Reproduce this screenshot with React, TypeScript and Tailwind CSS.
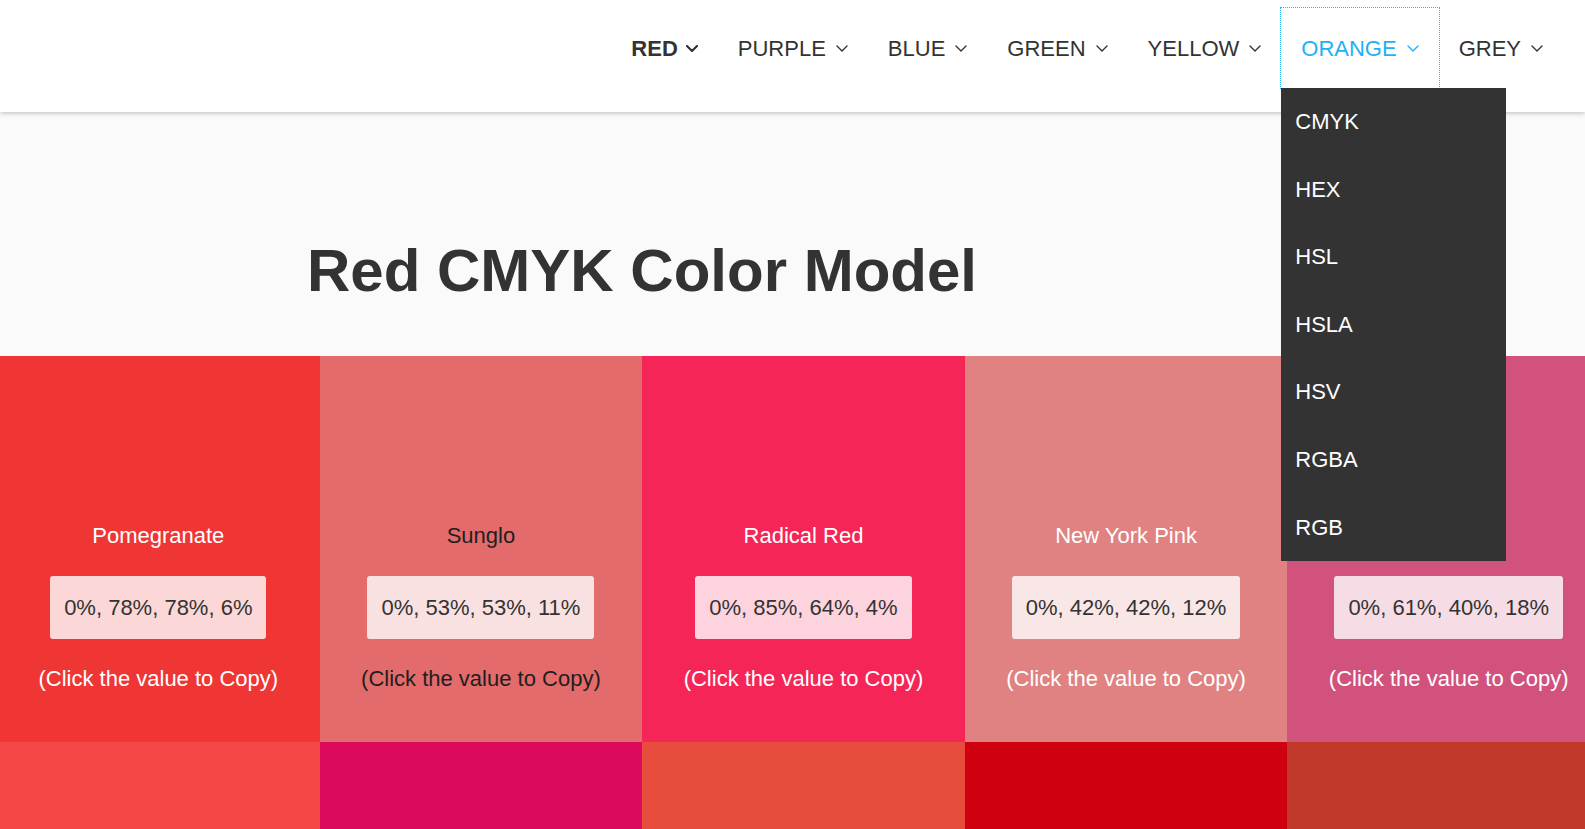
import React from 'react';

const Chevron = ({ bold = false }: { bold?: boolean }) => (
  <svg width="12" height="7" viewBox="0 0 12 7" fill="none" stroke="currentColor" className={bold ? 'ml-2' : 'ml-2.5'}>
    <path d="M1 1l5 5 5-5" strokeWidth={bold ? 2.2 : 1.4} strokeLinecap="round" strokeLinejoin="round" />
  </svg>
);

const navItems = ['RED', 'PURPLE', 'BLUE', 'GREEN', 'YELLOW', 'ORANGE', 'GREY'];
const formats = ['CMYK', 'HEX', 'HSL', 'HSLA', 'HSV', 'RGBA', 'RGB'];

interface Swatch {
  name: string;
  value: string;
  bg: string;
  dark?: boolean;
}

const topRow: Swatch[] = [
  { name: 'Pomegranate', value: '0%, 78%, 78%, 6%', bg: 'bg-[#f03535]' },
  { name: 'Sunglo', value: '0%, 53%, 53%, 11%', bg: 'bg-[#e36b6b]', dark: true },
  { name: 'Radical Red', value: '0%, 85%, 64%, 4%', bg: 'bg-[#f52558]' },
  { name: 'New York Pink', value: '0%, 42%, 42%, 12%', bg: 'bg-[#e08282]' },
  { name: 'Cabaret', value: '0%, 61%, 40%, 18%', bg: 'bg-[#d1527d]' },
];

const bottomRow = ['bg-[#f64747]', 'bg-[#db0a5b]', 'bg-[#e74c3c]', 'bg-[#cf000f]', 'bg-[#c0392b]'];

const SwatchCard = ({ s }: { s: Swatch }) => (
  <div className={`w-[322.6px] h-[386px] shrink-0 flex flex-col items-center pt-[166px] ${s.bg} ${s.dark ? 'text-[#1f1f1f]' : 'text-white'}`}>
    <p className="leading-[27px]">{s.name}</p>
    <button className="mt-[27px] px-[14px] py-[18px] leading-[27px] rounded-[3px] bg-white/80 text-[#333]">{s.value}</button>
    <p className="mt-[26px] leading-[27px]">(Click the value to Copy)</p>
  </div>
);

export default function App() {
  return (
    <div className="min-h-screen overflow-hidden bg-[#fafafa] text-[22px] text-[#333]" style={{ fontFamily: '"Liberation Sans", Arial, sans-serif' }}>
      <header className="relative z-10 h-[112px] bg-white shadow-[0_1px_5px_rgba(0,0,0,0.25)]">
        <ul className="flex justify-end pt-2 pr-[22px]">
          {navItems.map((item) => {
            const active = item === 'ORANGE';
            return (
              <li
                key={item}
                className={`relative h-20 px-5 flex items-center ${item === 'RED' ? 'font-bold' : ''} ${active ? 'text-[#1eb1f4] outline-1 outline-dotted outline-[#1eb1f4]' : ''}`}
              >
                <span>{item}</span>
                <Chevron bold={item === 'RED'} />
                {active && (
                  <ul className="absolute top-full left-0 w-[225px] bg-[#333] text-white">
                    {formats.map((f) => (
                      <li key={f} className="px-[14px] py-5 leading-[27.6px]">{f}</li>
                    ))}
                  </ul>
                )}
              </li>
            );
          })}
        </ul>
      </header>

      <section className="pt-[123px] pb-[49px] pl-[307px]">
        <h1 className="text-[60px] leading-[72px] font-bold text-[#333]">Red CMYK Color Model</h1>
      </section>

      <div className="flex ml-[-3px]">
        {topRow.map((s) => (
          <SwatchCard key={s.name} s={s} />
        ))}
      </div>
      <div className="flex ml-[-3px]">
        {bottomRow.map((bg) => (
          <div key={bg} className={`w-[322.6px] h-[386px] shrink-0 ${bg}`} />
        ))}
      </div>
    </div>
  );
}
